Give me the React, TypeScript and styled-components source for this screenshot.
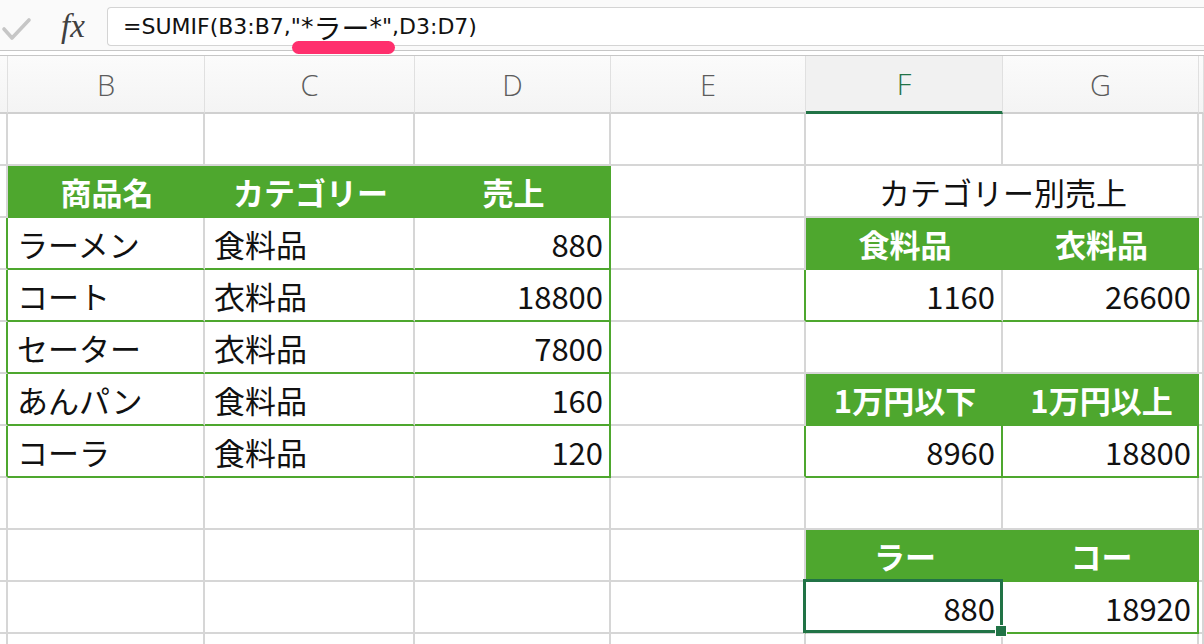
import React from "react";
import styled, { createGlobalStyle, css } from "styled-components";

const GREEN = "#4ea72e";
const DARK = "#217346";
const GRID = "#d6d6d6";
const COLS = "8px 197px 210px 196px 195px 197px 196px 1fr";

const GlobalStyle = createGlobalStyle`
  html, body {
    margin: 0;
    padding: 0;
    background: #fff;
  }
  body {
    font-family: "Noto Sans CJK JP", "Noto Sans", sans-serif;
  }
`;

const Window = styled.div`
  width: 1204px;
  height: 644px;
  overflow: hidden;
  background: #fff;
  display: flex;
  flex-direction: column;
`;

const FormulaBar = styled.div`
  position: relative;
  flex: none;
  height: 51px;
  padding-top: 7px;
  box-sizing: border-box;
  display: flex;
  align-items: flex-start;
  background: #fafafa;
  border-bottom: 1px solid #c6c6c6;
`;

const IconSlot = styled.div<{ $w: number }>`
  width: ${(p) => p.$w}px;
  height: 39px;
  flex: none;
  display: flex;
  align-items: center;
`;

const Fx = styled.span`
  margin-left: 11px;
  font-family: "Liberation Serif", "DejaVu Serif", serif;
  font-style: italic;
  font-size: 33px;
  color: #404040;
  line-height: 1;
`;

const FormulaInput = styled.div`
  flex: 1;
  height: 39px;
  box-sizing: border-box;
  display: flex;
  align-items: center;
  padding-left: 15px;
  background: #fff;
  border: 1px solid #d4d4d4;
  border-right: none;
  border-radius: 4px 0 0 4px;
  font-family: "DejaVu Sans", "Noto Sans CJK JP", sans-serif;
  font-size: 22px;
  color: #111;
  white-space: nowrap;
`;

const Kana = styled.span`
  font-family: "Noto Sans CJK JP", sans-serif;
  font-size: 28px;
  line-height: 1;
`;

const Star = styled.span`
  font-size: 25px;
`;

const Marker = styled.div`
  position: absolute;
  left: 292px;
  top: 41px;
  width: 103px;
  height: 13px;
  border-radius: 7px;
  background: #ff2f6d;
  z-index: 2;
`;

const ColumnHeader = styled.div`
  flex: none;
  margin-top: 4px;
  display: grid;
  grid-template-columns: ${COLS};
  height: 58px;
  border-top: 1px solid #c6c6c6;
`;

const HeadCell = styled.div<{ $active?: boolean }>`
  box-sizing: border-box;
  display: flex;
  align-items: center;
  justify-content: center;
  border-right: 1px solid #e0e0e0;
  border-bottom: 2px solid #d0d0d0;
  background: linear-gradient(#fbfbfb, #f4f4f4);
  font-family: "Open Sans", "Liberation Sans", sans-serif;
  font-weight: 300;
  font-size: 29px;
  color: #5c5c5c;
  ${(p) =>
    p.$active &&
    css`
      background: #f1f1f1;
      color: ${DARK};
      border-bottom: 3px solid ${DARK};
    `}
`;

const Sheet = styled.div`
  display: grid;
  grid-template-columns: ${COLS};
  grid-auto-rows: 52px;
`;

type CellProps = {
  $head?: boolean;
  $align?: "left" | "right" | "center";
  $right?: string;
  $bottom?: string;
  $span?: number;
  $selected?: boolean;
  $empty?: boolean;
};

const Cell = styled.div<CellProps>`
  position: relative;
  box-sizing: border-box;
  min-width: 0;
  display: flex;
  align-items: center;
  justify-content: ${(p) =>
    p.$align === "right" ? "flex-end" : p.$align === "center" ? "center" : "flex-start"};
  padding: ${(p) => (p.$empty ? "0" : "0 6px 0 9px")};
  grid-column: span ${(p) => p.$span || 1};
  border-right: 2px solid ${(p) => p.$right || GRID};
  border-bottom: 2px solid ${(p) => p.$bottom || GRID};
  font-size: 31px;
  line-height: 1;
  color: #111;
  white-space: nowrap;
  ${(p) =>
    p.$head &&
    css`
      justify-content: center;
      background: ${GREEN};
      color: #fff;
      font-weight: 700;
      border-right-color: ${GREEN};
      border-bottom-color: ${GREEN};
    `}
  ${(p) =>
    p.$selected &&
    css`
      &::after {
        content: "";
        position: absolute;
        left: -3px;
        top: -3px;
        right: -2px;
        bottom: -1px;
        border: 3px solid ${DARK};
        pointer-events: none;
      }
      &::before {
        content: "";
        position: absolute;
        right: -6px;
        bottom: -5px;
        width: 10px;
        height: 10px;
        background: ${DARK};
        border: 1px solid #fff;
        z-index: 3;
      }
    `}
`;

type Spec = {
  text?: string;
  head?: boolean;
  align?: "left" | "right" | "center";
  right?: string;
  bottom?: string;
  span?: number;
  selected?: boolean;
};

const e = (o: Spec = {}): Spec => o;
const plainRow = (): Spec[] => [e(), e(), e(), e(), e(), e(), e(), e()];

const item = (name: string, cat: string, sales: string): Spec[] => [
  e({ right: GREEN }),
  e({ text: name, bottom: GREEN }),
  e({ text: cat, bottom: GREEN }),
  e({ text: sales, align: "right", right: GREEN, bottom: GREEN }),
];

const rows: Spec[][] = [
  plainRow(),
  [
    e(),
    e({ text: "商品名", head: true }),
    e({ text: "カテゴリー", head: true }),
    e({ text: "売上", head: true }),
    e(),
    e({ text: "カテゴリー別売上", align: "center", span: 2 }),
    e(),
  ],
  [
    ...item("ラーメン", "食料品", "880"),
    e(),
    e({ text: "食料品", head: true }),
    e({ text: "衣料品", head: true }),
    e(),
  ],
  [
    ...item("コート", "衣料品", "18800"),
    e({ right: GREEN }),
    e({ text: "1160", align: "right", bottom: GREEN }),
    e({ text: "26600", align: "right", right: GREEN, bottom: GREEN }),
    e(),
  ],
  [...item("セーター", "衣料品", "7800"), e(), e(), e(), e()],
  [
    ...item("あんパン", "食料品", "160"),
    e(),
    e({ text: "1万円以下", head: true }),
    e({ text: "1万円以上", head: true }),
    e(),
  ],
  [
    ...item("コーラ", "食料品", "120"),
    e({ right: GREEN }),
    e({ text: "8960", align: "right", right: GREEN, bottom: GREEN }),
    e({ text: "18800", align: "right", right: GREEN, bottom: GREEN }),
    e(),
  ],
  plainRow(),
  [e(), e(), e(), e(), e(), e({ text: "ラー", head: true }), e({ text: "コー", head: true }), e()],
  [
    e(),
    e(),
    e(),
    e(),
    e({ right: GREEN }),
    e({ text: "880", align: "right", selected: true }),
    e({ text: "18920", align: "right", right: GREEN, bottom: GREEN }),
    e(),
  ],
  plainRow(),
];

const letters = ["", "B", "C", "D", "E", "F", "G", ""];

const CheckIcon = () => (
  <svg width="34" height="30" viewBox="0 0 34 30">
    <polyline
      points="4,17 12,26 29,8"
      fill="none"
      stroke="#c6c6c6"
      strokeWidth="3.6"
      strokeLinecap="round"
      strokeLinejoin="round"
    />
  </svg>
);

const App: React.FC = () => {
  return (
    <Window>
      <GlobalStyle />
      <FormulaBar>
        <IconSlot $w={50}>
          <CheckIcon />
        </IconSlot>
        <IconSlot $w={57}>
          <Fx>fx</Fx>
        </IconSlot>
        <FormulaInput>
          =SUMIF(B3:B7,"<Star>*</Star>
          <Kana>ラー</Kana>
          <Star>*</Star>",D3:D7)
        </FormulaInput>
        <Marker />
      </FormulaBar>

      <ColumnHeader>
        {letters.map((l, i) => (
          <HeadCell key={i} $active={l === "F"}>
            {l}
          </HeadCell>
        ))}
      </ColumnHeader>

      <Sheet>
        {rows.map((row, r) =>
          row.map((c, i) => (
            <Cell
              key={`${r}-${i}`}
              $head={c.head}
              $align={c.align}
              $right={c.right}
              $bottom={c.bottom}
              $span={c.span}
              $selected={c.selected}
              $empty={!c.text}
            >
              {c.text}
            </Cell>
          ))
        )}
      </Sheet>
    </Window>
  );
};

export default App;
